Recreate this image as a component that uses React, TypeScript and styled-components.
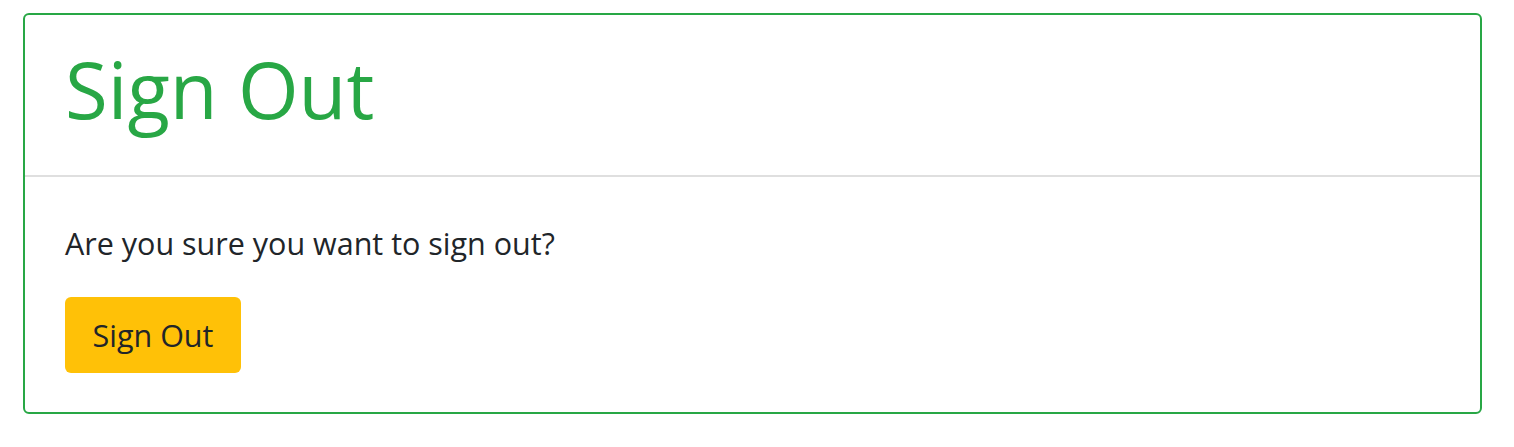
import React from "react";
import styled, { createGlobalStyle } from "styled-components";

const Global = createGlobalStyle`
  html, body { margin: 0; padding: 0; background: #fff; }
  body { font-family: "Open Sans", "Noto Sans", sans-serif; color: #212529; }
`;

const Page = styled.div`
  padding: 13px 32px 0 23px;
`;

const Card = styled.section`
  border: 2px solid #28a745;
  border-radius: 6px;
  background: #fff;
  display: flex;
  flex-direction: column;
`;

const Header = styled.header`
  padding: 20px 40px 31px;
  border-bottom: 2px solid #dfdfdf;
`;

const Title = styled.h1`
  margin: 0;
  font-size: 78px;
  font-weight: 400;
  line-height: 1.4;
  color: #28a745;
`;

const Body = styled.div`
  padding: 44px 40px 39px;
  display: flex;
  flex-direction: column;
  align-items: flex-start;
  gap: 30px;
`;

const Text = styled.p`
  margin: 0;
  font-size: 30.5px;
  line-height: 1.5;
`;

const Button = styled.button`
  font-family: inherit;
  font-size: 30.5px;
  color: #212529;
  background: #ffc107;
  border: none;
  border-radius: 6px;
  width: 176px;
  height: 76px;
  padding: 0;
  cursor: pointer;
`;

export default function App() {
  return (
    <>
      <Global />
      <Page>
        <Card>
          <Header>
            <Title>Sign Out</Title>
          </Header>
          <Body>
            <Text>Are you sure you want to sign out?</Text>
            <Button>Sign Out</Button>
          </Body>
        </Card>
      </Page>
    </>
  );
}
